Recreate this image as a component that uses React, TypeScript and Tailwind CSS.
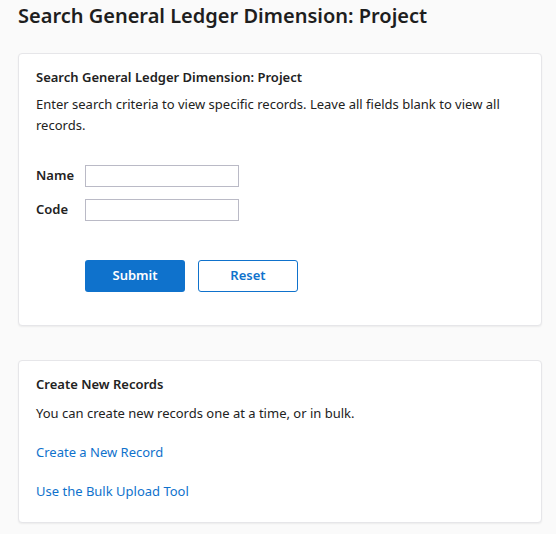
export default function App() {
  return (
    <div className="min-h-[534px] w-[556px] bg-[#fafafa] px-[18px] text-[#222] font-['Noto_Sans',sans-serif]">
      <h1 className="pt-[2px] text-[20px] leading-[28px] font-semibold text-[#1e1e1e]">
        Search General Ledger Dimension: Project
      </h1>
      <div className="mt-[23px] w-[524px] rounded-[4px] border border-[#e6e6e9] bg-white pl-[17px] pr-[17px] pt-[14px] pb-[33px] shadow-[0_1px_2px_rgba(0,0,0,0.06)]">
        <h2 className="text-[13px] leading-[18px] font-semibold">Search General Ledger Dimension: Project</h2>
        <p className="mt-[8px] text-[13px] leading-[21px]">
          Enter search criteria to view specific records. Leave all fields blank to view all records.
        </p>
        <div className="mt-[29px] flex flex-col gap-[12px]">
          <div className="flex items-center">
            <label className="w-[49px] text-[13px] font-semibold">Name</label>
            <input className="h-[22px] w-[154px] border border-[#babac6] bg-white outline-none" />
          </div>
          <div className="flex items-center">
            <label className="w-[49px] text-[13px] font-semibold">Code</label>
            <input className="h-[22px] w-[154px] border border-[#babac6] bg-white outline-none" />
          </div>
        </div>
        <div className="mt-[39px] ml-[49px] flex gap-[13px]">
          <button className="h-[32px] w-[100px] rounded-[3px] bg-[#0f72cc] text-[13px] font-semibold text-white">
            Submit
          </button>
          <button className="h-[32px] w-[100px] rounded-[3px] border border-[#0f72cc] bg-white text-[13px] font-semibold text-[#0f72cc]">
            Reset
          </button>
        </div>
      </div>
      <div className="mt-[34px] w-[524px] rounded-[4px] border border-[#e6e6e9] bg-white pl-[17px] pr-[17px] pt-[14px] pb-[20px] shadow-[0_1px_2px_rgba(0,0,0,0.06)]">
        <h2 className="text-[13px] leading-[18px] font-semibold">Create New Records</h2>
        <p className="mt-[10px] text-[13px] leading-[21px]">You can create new records one at a time, or in bulk.</p>
        <div className="mt-[18px] flex flex-col gap-[18px] text-[13px] leading-[21px] text-[#0f72cc]">
          <a href="#">Create a New Record</a>
          <a href="#">Use the Bulk Upload Tool</a>
        </div>
      </div>
    </div>
  );
}
